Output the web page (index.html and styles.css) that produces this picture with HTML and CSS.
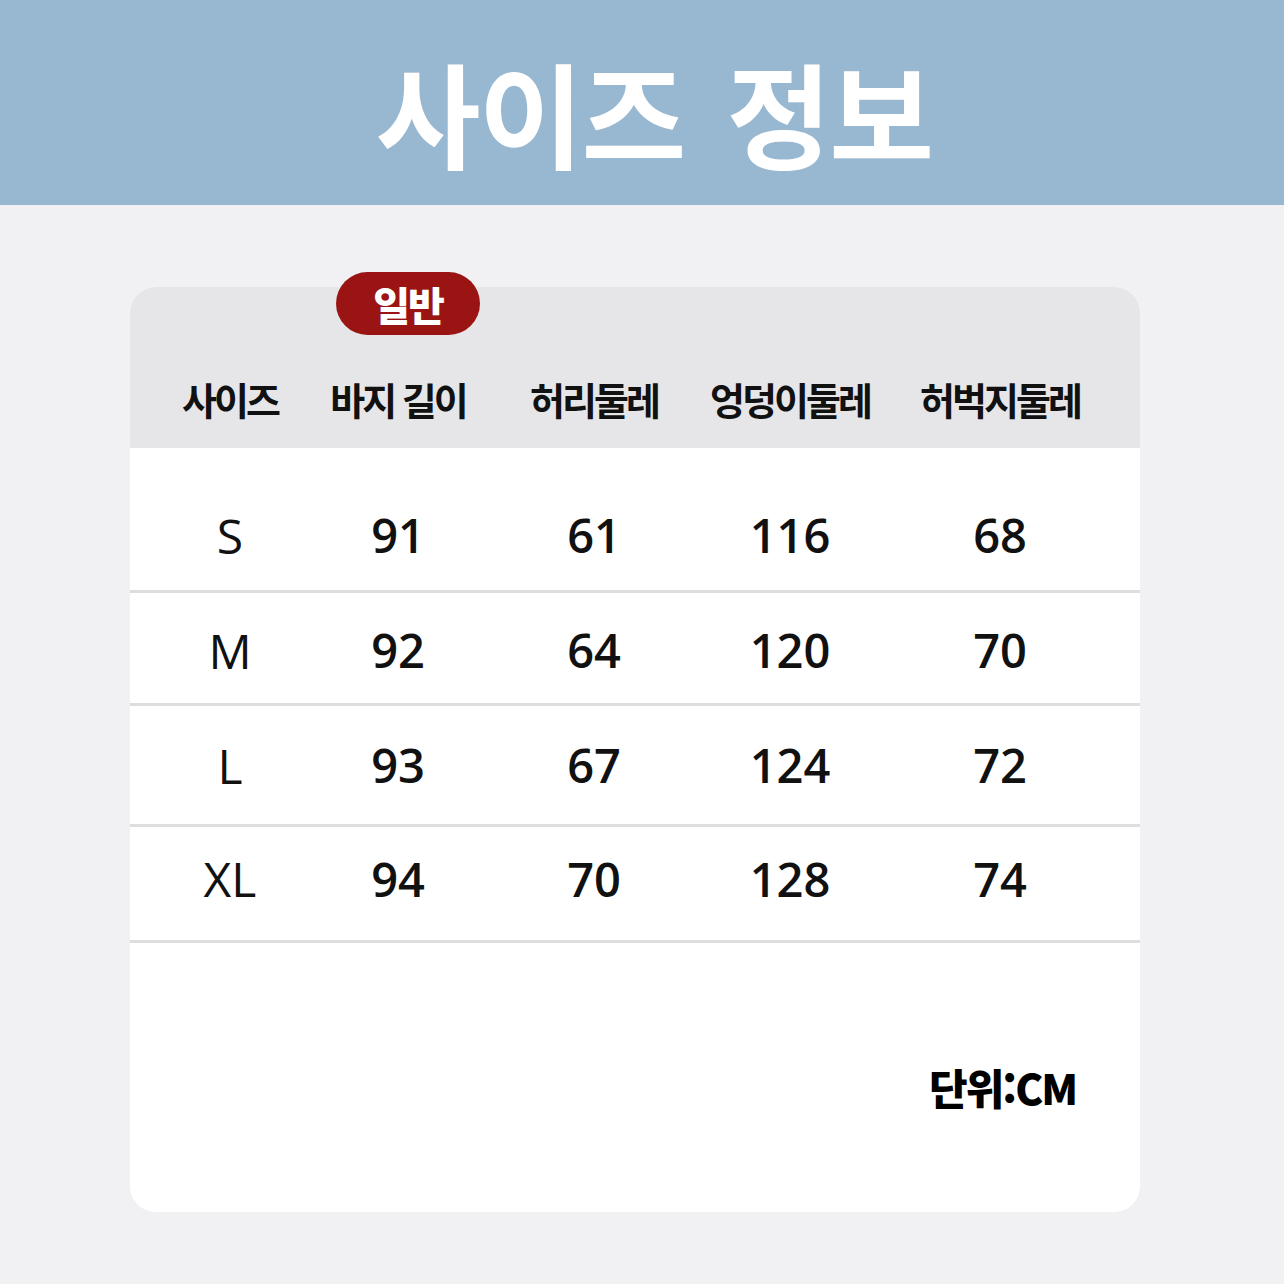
FILE: index.html
```html
<!DOCTYPE html>
<html lang="ko">
<head>
<meta charset="utf-8">
<link rel="stylesheet" href="styles.css">
</head>
<body>
<header class="banner"><h1 class="title">사이즈 정보</h1></header>
<main class="page">
  <section class="card">
    <span class="badge">일반</span>
    <div class="row head">
      <div>사이즈</div><div>바지 길이</div><div>허리둘레</div><div>엉덩이둘레</div><div>허벅지둘레</div>
    </div>
    <div class="row data r1"><div class="size">S</div><div>91</div><div>61</div><div>116</div><div>68</div></div>
    <div class="row data r2"><div class="size">M</div><div>92</div><div>64</div><div>120</div><div>70</div></div>
    <div class="row data r3"><div class="size">L</div><div>93</div><div>67</div><div>124</div><div>72</div></div>
    <div class="row data r4"><div class="size">XL</div><div>94</div><div>70</div><div>128</div><div>74</div></div>
    <div class="foot"><span class="unit">단위:CM</span></div>
  </section>
</main>
</body>
</html>
```
FILE: styles.css
```css
html, body { margin: 0; padding: 0; }
body {
  width: 1284px; height: 1284px;
  background: #f1f1f3;
  font-family: "Noto Sans CJK KR", "Noto Sans", sans-serif;
  overflow: hidden;
}
.banner {
  height: 205px;
  background: #98b7d1;
  display: flex; align-items: center; justify-content: center;
}
.title {
  margin: 0;
  color: #fff;
  font-size: 114px;
  font-weight: 700;
  letter-spacing: -2px;
  word-spacing: 12px;
  line-height: 1;
  padding: 16px 0 0 24px;
}
.page { padding: 82px 144px 0 130px; }
.card {
  position: relative;
  background: #fff;
  border-radius: 26px;
  height: 925px;
  display: flex; flex-direction: column;
}
.badge {
  position: absolute;
  left: 206px; top: -15px;
  width: 144px; height: 63px;
  border-radius: 32px;
  background: #9b1414;
  color: #fff;
  font-size: 40px; font-weight: 900;
  display: flex; align-items: center; justify-content: center;
  letter-spacing: -2px;
  line-height: 1;
}
.row {
  display: grid;
  grid-template-columns: 168px 168px 224px 168px 252px;
  padding-left: 16px;
  text-align: center;
  align-items: center;
}
.head {
  height: 161px;
  background: #e6e6e8;
  border-radius: 26px 26px 0 0;
  font-size: 38px; font-weight: 700;
  color: #111;
  letter-spacing: -3px;
  align-items: end;
  padding-bottom: 30px;
  box-sizing: border-box;
}
.head > div { line-height: 1; white-space: nowrap; }
.data {
  border-bottom: 3px solid #dedede;
  font-family: "Open Sans", sans-serif;
  font-size: 47px; font-weight: 600;
  color: #111;
  box-sizing: border-box;
}
.data.r1 { height: 145px; padding-top: 32px; }
.data.r2 { height: 113px; padding-top: 4px; }
.data.r3 { height: 121px; padding-top: 0; }
.data.r4 { height: 116px; padding-bottom: 10px; }
.data .size { font-weight: 400; font-size: 48px; }
.foot {
  flex: 1;
  display: flex; justify-content: flex-end;
  padding: 123px 64px 0 0;
}
.unit {
  font-size: 42px; font-weight: 900; color: #000;
  letter-spacing: -2px;
  line-height: 1;
  height: 44px;
}
```
